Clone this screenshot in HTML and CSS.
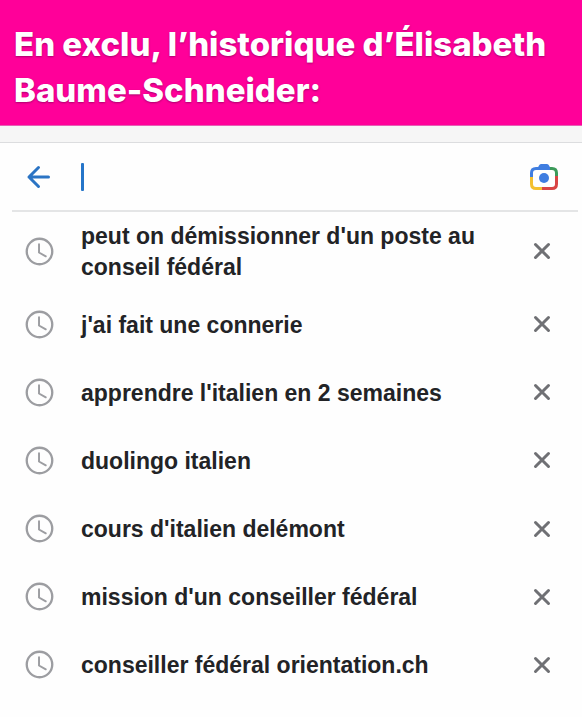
FILE: index.html
```
<!DOCTYPE html>
<html lang="fr">

<head>
    <meta charset="UTF-8" />
    <meta name="viewport" content="width=device-width, initial-scale=1.0" />
    <title>Historique</title>
    <link rel="stylesheet" href="styles.css">
</head>

<body>
    <!-- Shared icons -->
    <svg class="sprite" aria-hidden="true">
        <symbol id="clock" viewBox="0 0 30 30">
            <circle cx="15" cy="15" r="13.2" stroke-width="2.4" />
            <path d="M14.5 7.5v8.5l7 4" stroke-width="2" />
        </symbol>
        <symbol id="cross" viewBox="0 0 18 18">
            <path d="M2.5 2.5l13 13M15.5 2.5l-13 13" />
        </symbol>
    </svg>

    <header class="banner">
        <h1>En exclu, l’historique d’Élisabeth Baume-Schneider:</h1>
    </header>
    <div class="strip"></div>

    <main class="history">
        <form class="search-bar">
            <button type="button" class="icon-button back" aria-label="Retour">
                <svg class="arrow" viewBox="0 0 24 24">
                    <path d="M22.5 12H3M12.5 2.5L3 12l9.500 9.500" />
                </svg>
            </button>
            <span class="caret"></span>
            <input type="text" class="search-input" aria-label="Rechercher" />
            <button type="button" class="icon-button" aria-label="Recherche par image">
                <svg class="camera" viewBox="0 0 30 28">
                    <path class="fill-blue" d="M8 6l2-3.5Q10.5 1 12 1h6q1.5 0 2 1.5L22 6z" />
                    <path class="blue" d="M2.5 14V10q0-4.5 4.5-4.5h14" />
                    <path class="green" d="M21 5.5h2q4.5 0 4.5 4.5v3" />
                    <path class="red" d="M27.5 13v8q0 4.5-4.5 4.5H13" />
                    <path class="yellow" d="M2.5 14v7q0 4.5 4.5 4.5h6" />
                    <circle class="fill-blue" cx="15" cy="15" r="5" />
                </svg>
            </button>
        </form>

        <ul class="history-list">
            <li class="history-item">
                <svg class="clock"><use href="#clock" /></svg>
                <span class="query">peut on démissionner d'un poste au conseil fédéral</span>
                <button class="icon-button" aria-label="Supprimer"><svg class="cross"><use href="#cross" /></svg></button>
            </li>
            <li class="history-item">
                <svg class="clock"><use href="#clock" /></svg>
                <span class="query">j'ai fait une connerie</span>
                <button class="icon-button" aria-label="Supprimer"><svg class="cross"><use href="#cross" /></svg></button>
            </li>
            <li class="history-item">
                <svg class="clock"><use href="#clock" /></svg>
                <span class="query">apprendre l'italien en 2 semaines</span>
                <button class="icon-button" aria-label="Supprimer"><svg class="cross"><use href="#cross" /></svg></button>
            </li>
            <li class="history-item">
                <svg class="clock"><use href="#clock" /></svg>
                <span class="query">duolingo italien</span>
                <button class="icon-button" aria-label="Supprimer"><svg class="cross"><use href="#cross" /></svg></button>
            </li>
            <li class="history-item">
                <svg class="clock"><use href="#clock" /></svg>
                <span class="query">cours d'italien delémont</span>
                <button class="icon-button" aria-label="Supprimer"><svg class="cross"><use href="#cross" /></svg></button>
            </li>
            <li class="history-item">
                <svg class="clock"><use href="#clock" /></svg>
                <span class="query">mission d'un conseiller fédéral</span>
                <button class="icon-button" aria-label="Supprimer"><svg class="cross"><use href="#cross" /></svg></button>
            </li>
            <li class="history-item">
                <svg class="clock"><use href="#clock" /></svg>
                <span class="query">conseiller fédéral orientation.ch</span>
                <button class="icon-button" aria-label="Supprimer"><svg class="cross"><use href="#cross" /></svg></button>
            </li>
        </ul>
    </main>
</body>

</html>
```

FILE: styles.css
```
* {
    box-sizing: border-box;
}

body {
    margin: 0;
    min-height: 100vh;
    display: flex;
    flex-direction: column;
    background-color: #fefefe;
    color: #222326;
    font-family: "Liberation Sans", Arial, sans-serif;
}

.sprite {
    display: none;
}

.banner {
    background-color: #ff0099;
    padding: 21px 14px 12px;
    border-bottom: 1px solid #e560b4;
}

.banner h1 {
    margin: 0;
    color: #fff;
    font-family: Inter, sans-serif;
    font-size: 33px;
    font-weight: 800;
    line-height: 46px;
    text-shadow: 0 1px 2px rgba(90, 0, 70, 0.5);
}

.strip {
    height: 17px;
    background-color: #f6f6f6;
    border-bottom: 1px solid #dcdddf;
}

.history {
    flex: 1;
    display: flex;
    flex-direction: column;
    padding: 0 4px 18px 12px;
}

.search-bar {
    display: flex;
    align-items: center;
    height: 69px;
    padding: 0 16px 0 10px;
    border-bottom: 2px solid #e4e5e6;
}

.icon-button {
    display: flex;
    align-items: center;
    justify-content: center;
    flex: none;
    width: 36px;
    height: 36px;
    padding: 0;
    border: none;
    background: none;
    cursor: pointer;
}

.back {
    width: 32px;
}

.caret {
    width: 3px;
    height: 28px;
    margin-left: 27px;
    background-color: #2575c9;
    border-radius: 1px;
}

.search-input {
    flex: 1;
    min-width: 0;
    height: 36px;
    border: none;
    outline: none;
    background: none;
    font: inherit;
    font-size: 23px;
}

.history-list {
    flex: 1;
    display: flex;
    flex-direction: column;
    justify-content: space-between;
    margin: 0;
    padding: 0;
    list-style: none;
}

.history-item {
    display: flex;
    align-items: center;
    min-height: 68px;
    padding: 7px 18px 7px 13px;
}

.query {
    flex: 1;
    margin: 0 40px 0 27px;
    padding-top: 2px;
    font-size: 23px;
    font-weight: 700;
    line-height: 31px;
}

.arrow,
.clock,
.cross,
.camera {
    flex: none;
    fill: none;
}

.arrow {
    width: 24px;
    height: 24px;
    stroke: #2b74c4;
    stroke-width: 3;
    stroke-linecap: round;
    stroke-linejoin: round;
}

.clock {
    width: 29px;
    height: 29px;
    stroke: #9c9da1;
}

.clock,
.cross {
    stroke-linecap: round;
}

.cross {
    width: 18px;
    height: 18px;
    stroke: #6f7074;
    stroke-width: 3;
}

.camera {
    width: 30px;
    height: 28px;
    stroke-width: 3;
}

.blue {
    stroke: #3f7de0;
}

.green {
    stroke: #3c9a5a;
}

.red {
    stroke: #d94444;
}

.yellow {
    stroke: #f3c02f;
}

.fill-blue {
    fill: #3f7de0;
}
```
